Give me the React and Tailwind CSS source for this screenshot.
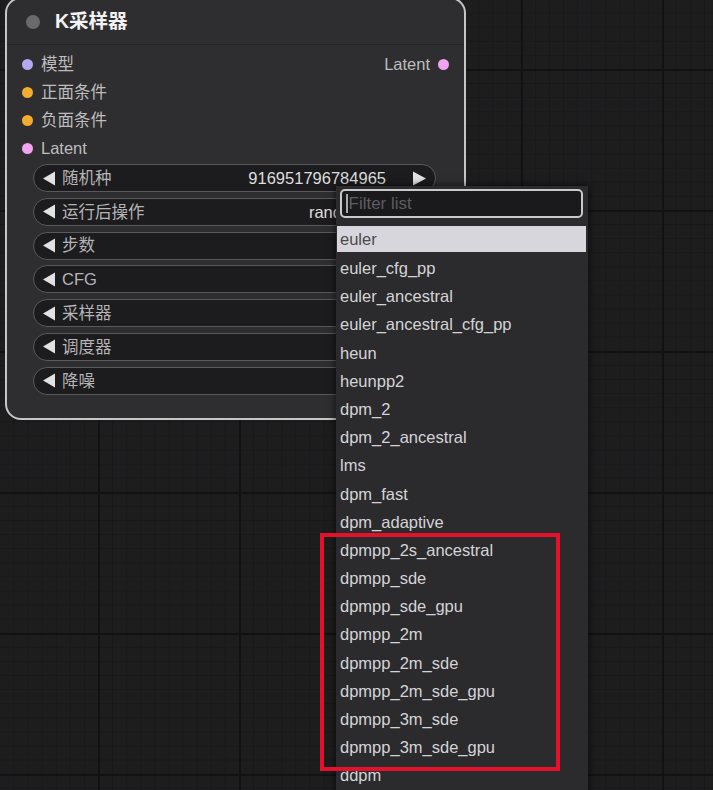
import React from "react";

const inputs = [
  { label: "模型", color: "bg-[#b3aaf0]" },
  { label: "正面条件", color: "bg-[#f3ad2e]" },
  { label: "负面条件", color: "bg-[#f3ad2e]" },
  { label: "Latent", color: "bg-[#f2a3f2]" },
];

const widgets = [
  { label: "随机种", value: "916951796784965" },
  { label: "运行后操作", value: "randomize" },
  { label: "步数", value: "20" },
  { label: "CFG", value: "8.0" },
  { label: "采样器", value: "euler" },
  { label: "调度器", value: "normal" },
  { label: "降噪", value: "1.00" },
];

const items = [
  "euler_cfg_pp",
  "euler_ancestral",
  "euler_ancestral_cfg_pp",
  "heun",
  "heunpp2",
  "dpm_2",
  "dpm_2_ancestral",
  "lms",
  "dpm_fast",
  "dpm_adaptive",
  "dpmpp_2s_ancestral",
  "dpmpp_sde",
  "dpmpp_sde_gpu",
  "dpmpp_2m",
  "dpmpp_2m_sde",
  "dpmpp_2m_sde_gpu",
  "dpmpp_3m_sde",
  "dpmpp_3m_sde_gpu",
  "ddpm",
  "lcm",
];

function TriLeft() {
  return (
    <svg width="14" height="15" viewBox="0 0 14 15" className="shrink-0">
      <polygon points="13,0.5 13,14.5 1,7.5" fill="#e2e2e2" />
    </svg>
  );
}

function TriRight() {
  return (
    <svg width="15" height="15" viewBox="0 0 15 15" className="shrink-0">
      <polygon points="1,0.5 1,14.5 14,7.5" fill="#e2e2e2" />
    </svg>
  );
}

export default function App() {
  return (
    <div className="relative w-[713px] h-[790px] overflow-hidden bg-[#1e1d1e] [background-image:linear-gradient(to_right,#121113_1.5px,transparent_1.5px),linear-gradient(to_bottom,#121113_1.5px,transparent_1.5px),linear-gradient(to_right,#18171a_1px,transparent_1px),linear-gradient(to_bottom,#18171a_1px,transparent_1px)] [background-size:141px_141px,141px_141px,14.1px_14.1px,14.1px_14.1px] [background-position:98px_69px] font-['Liberation_Sans','Noto_Sans_CJK_SC',sans-serif]">
      {/* Node */}
      <div className="absolute left-[5px] top-[-3px] w-[461px] rounded-[16px] border-2 border-[#c6c6c6] bg-[#2e2d2f] pb-[23px]">
        <div className="h-[46px] flex items-center pl-[19px] gap-[15px] border-b border-[#232224]">
          <div className="w-[14px] h-[14px] rounded-full bg-[#6a696b]" />
          <span className="text-[19.5px] font-bold text-[#f2f2f2] leading-none">K采样器</span>
        </div>
        <div className="pt-[5px] flex flex-col">
          {inputs.map((inp, i) => (
            <div key={i} className="h-[28px] flex items-center justify-between">
              <div className="flex items-center pl-[15px] gap-[8px]">
                <div className={`w-[11px] h-[11px] rounded-full ${inp.color}`} />
                <span className="text-[16.5px] text-[#bdbdbd] leading-none">{inp.label}</span>
              </div>
              {i === 0 && (
                <div className="flex items-center pr-[15px] gap-[8px]">
                  <span className="text-[16.5px] text-[#bdbdbd] leading-none">Latent</span>
                  <div className="w-[11px] h-[11px] rounded-full bg-[#f2a3f2]" />
                </div>
              )}
            </div>
          ))}
        </div>
        <div className="mt-[2px] ml-[26px] w-[403px] flex flex-col gap-[5.8px]">
          {widgets.map((w, i) => (
            <div
              key={i}
              className="h-[28px] rounded-full border-[1.5px] border-[#5a595b] bg-[#1c1b1d] flex items-center pl-[8px] pr-[8px]"
            >
              <TriLeft />
              <span className="ml-[6px] text-[16.5px] text-[#b5b5b5] leading-none">{w.label}</span>
              <span className="ml-auto mr-[26px] text-[16.5px] text-[#dedede] leading-none">{w.value}</span>
              <TriRight />
            </div>
          ))}
        </div>
      </div>

      {/* Dropdown */}
      <div className="absolute left-[336px] top-[186px] w-[252px] h-[640px] bg-[#2b2a2d] shadow-[0_0_8px_rgba(0,0,0,0.7)] pt-[3px]">
        <div className="ml-[4px] w-[243px] h-[29px] rounded-[5px] border-2 border-[#c9c9c9] bg-[#1a191b] flex items-center pl-[4px]">
          <div className="w-[1.5px] h-[19px] bg-[#aaa]" />
          <span className="ml-[1px] text-[17px] text-[#5e5d60] leading-none">Filter list</span>
        </div>
        <div className="mt-[8px] flex flex-col">
          <div className="mx-[1px] w-[249px] h-[26px] mb-[2.2px] bg-[#d7d6dc] flex items-center pl-[3px]">
            <span className="text-[16.5px] text-[#4a494c] leading-none">euler</span>
          </div>
          {items.map((it) => (
            <div key={it} className="h-[28.2px] flex items-center pl-[4px]">
              <span className="text-[16.5px] text-[#d4d4d6] leading-none">{it}</span>
            </div>
          ))}
        </div>
      </div>

      {/* Red highlight box */}
      <div className="absolute left-[320px] top-[533px] w-[240px] h-[238px] border-[4.5px] border-[#e5112c]" />
    </div>
  );
}
